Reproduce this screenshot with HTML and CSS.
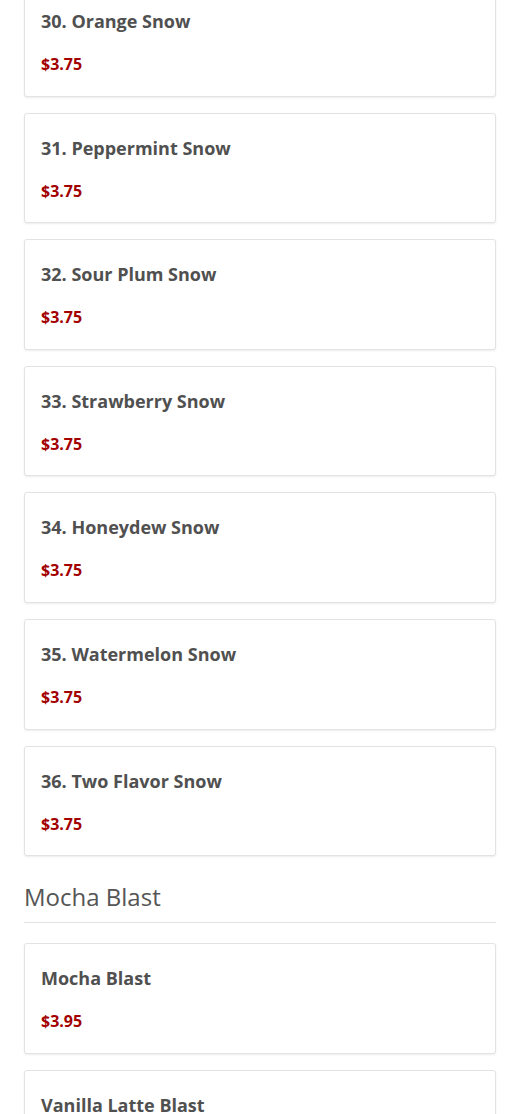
FILE: index.html
```html
<!DOCTYPE html>
<html>
<head>
    <meta charset="utf-8" />
    <meta name="viewport" content="width=device-width, initial-scale=1.0">
    <title>Menu</title>
    <link rel="stylesheet" href="styles.css">
</head>
<body>
    <div class="menu">
        <div class="item-list first-list">
            <div class="item-card">
                <div class="item-name">30. Orange Snow</div>
                <div class="item-price">$3.75</div>
            </div>
            <div class="item-card">
                <div class="item-name">31. Peppermint Snow</div>
                <div class="item-price">$3.75</div>
            </div>
            <div class="item-card">
                <div class="item-name">32. Sour Plum Snow</div>
                <div class="item-price">$3.75</div>
            </div>
            <div class="item-card">
                <div class="item-name">33. Strawberry Snow</div>
                <div class="item-price">$3.75</div>
            </div>
            <div class="item-card">
                <div class="item-name">34. Honeydew Snow</div>
                <div class="item-price">$3.75</div>
            </div>
            <div class="item-card">
                <div class="item-name">35. Watermelon Snow</div>
                <div class="item-price">$3.75</div>
            </div>
            <div class="item-card">
                <div class="item-name">36. Two Flavor Snow</div>
                <div class="item-price">$3.75</div>
            </div>
        </div>

        <h2 class="category-title">Mocha Blast</h2>
        <div class="item-list">
            <div class="item-card">
                <div class="item-name">Mocha Blast</div>
                <div class="item-price">$3.95</div>
            </div>
            <div class="item-card">
                <div class="item-name">Vanilla Latte Blast</div>
                <div class="item-price">$3.95</div>
            </div>
        </div>
    </div>
</body>
</html>
```

FILE: styles.css
```css
body {
    margin: 0;
    padding: 0;
    background: #fff;
    font-family: 'Open Sans', 'Liberation Sans', sans-serif;
    color: #555;
}
.menu {
    width: 472px;
    margin-left: 24px;
}
.item-list {
    display: flex;
    flex-direction: column;
    gap: 16px;
}
.first-list {
    margin-top: -14px; /* page is scrolled, first card cut off */
}
.item-card {
    border: 1px solid #e3e3e3;
    border-radius: 3px;
    box-shadow: 0 1px 2px rgba(0, 0, 0, 0.08);
    padding: 22px 16px 21.6px 16px;
    background: #fff;
}
.item-name {
    font-size: 18px;
    font-weight: 700;
    line-height: 24px;
    color: #505050;
}
.item-price {
    margin-top: 21px;
    font-size: 16px;
    font-weight: 700;
    line-height: 20px;
    color: #a30000;
}
.category-title {
    margin: 27px 0 20px 0;
    padding-bottom: 11px;
    border-bottom: 1px solid #e3e3e3;
    font-size: 24px;
    font-weight: 400;
    line-height: 28px;
    color: #555;
}
```
